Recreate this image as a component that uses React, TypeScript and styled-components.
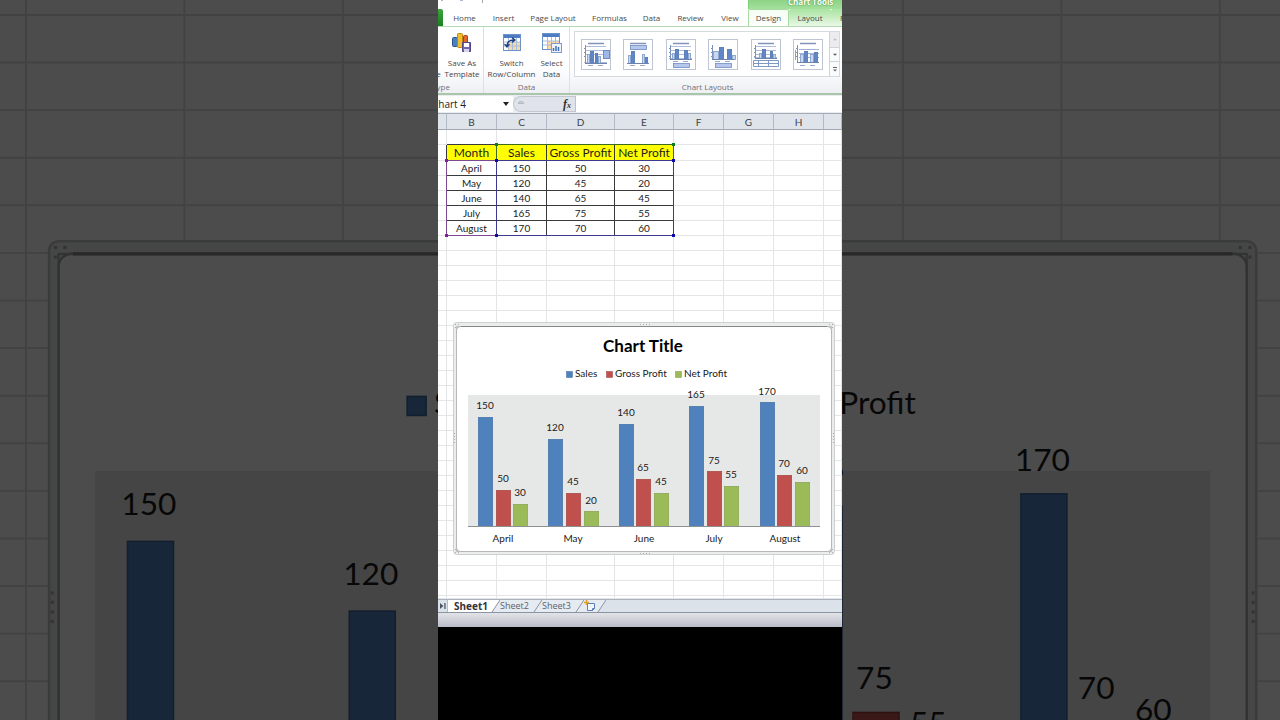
import React from "react";
import styled, { createGlobalStyle } from "styled-components";

const ui = `"Open Sans", "Noto Sans", sans-serif`;
const sheetFont = `Lato, "Open Sans", sans-serif`;

const GlobalStyle = createGlobalStyle`
  *, *::before, *::after { box-sizing: border-box; }
  body { margin: 0; background: #000; font-family: ${ui}; }
  button, input { font-family: inherit; margin: 0; padding: 0; border: 0; background: none; color: inherit; }
`;

/* ---------- data ---------- */

const series = [
  { name: "Sales", color: "#4f81bd", edge: "#3c699f", values: [150, 120, 140, 165, 170] },
  { name: "Gross Profit", color: "#c0504d", edge: "#9c3e3b", values: [50, 45, 65, 75, 70] },
  { name: "Net Profit", color: "#9bbb59", edge: "#7d9a43", values: [30, 20, 45, 55, 60] },
];
const months = ["April", "May", "June", "July", "August"];
const columns = [
  { id: "A", width: 9 },
  { id: "B", width: 50 },
  { id: "C", width: 50 },
  { id: "D", width: 68 },
  { id: "E", width: 59 },
  { id: "F", width: 50 },
  { id: "G", width: 50 },
  { id: "H", width: 50 },
  { id: "I", width: 18 },
];
const EMPTY_ROWS = 24;

/* ---------- page ---------- */

const Page = styled.main`
  position: relative;
  display: flex;
  justify-content: center;
  min-height: 100vh;
  overflow: hidden;
  background: #4c4c4c;
`;

const Backdrop = styled.svg`
  position: absolute;
  inset: 0;
  width: 100%;
  height: 100%;
`;

const Player = styled.section`
  position: relative;
  flex: 0 1 404px;
  min-width: 0;
  overflow: hidden;
  background: #000;
`;

const Excel = styled.div`
  display: flex;
  flex-direction: column;
  background: #fff;
`;

/* ---------- title and tabs ---------- */

const TitleRow = styled.header`
  display: flex;
  align-items: flex-end;
  justify-content: space-between;
  height: 9px;
  overflow: hidden;
`;

const QuickAccess = styled.svg`
  width: 60px;
  height: 9px;
`;

const ContextTitle = styled.div`
  flex: 0 0 94px;
  padding-left: 39px;
  font-size: 8px;
  line-height: 15px;
  font-weight: 700;
  white-space: nowrap;
  color: #fff;
  text-shadow: 0 0 2px #4f9a4a, 0 0 1px #4f9a4a;
  background: linear-gradient(#7ecb78, #a4e09c);
  border-left: 1px solid #7fcf79;
`;

const TabStrip = styled.nav`
  display: flex;
  height: 18px;
  overflow: hidden;
  border-bottom: 1px solid #b4d9b4;
`;

const FileTab = styled.button`
  flex: 0 0 5px;
  background: linear-gradient(#3fa33c, #17801f);
  border-radius: 0 2px 0 0;
`;

const Tab = styled.button<{ $w: number; $context?: boolean; $active?: boolean }>`
  flex: 0 0 ${(p) => p.$w}px;
  height: ${(p) => (p.$active ? 18 : 17)}px;
  font-size: 8px;
  line-height: ${(p) => (p.$active ? 15 : 18)}px;
  white-space: nowrap;
  color: #4a4a4a;
  background: ${(p) =>
    p.$active
      ? "linear-gradient(#f4fcf2, #fff)"
      : p.$context
        ? "linear-gradient(#a9e3a1, #e9f8e6)"
        : "transparent"};
  border: ${(p) => (p.$active ? "1px solid #a5dba0" : "0")};
  border-bottom: 0;
  border-radius: 2px 2px 0 0;
  text-align: ${(p) => (p.$context && p.$w > 42 ? "left" : "center")};
  padding-left: ${(p) => (p.$w > 42 && p.$context ? 9 : 0)}px;
  padding-bottom: ${(p) => (p.$active ? 2 : 0)}px;
`;

const tabs = [
  { label: "Home", w: 43 },
  { label: "Insert", w: 35 },
  { label: "Page Layout", w: 64 },
  { label: "Formulas", w: 49 },
  { label: "Data", w: 35 },
  { label: "Review", w: 43 },
  { label: "View", w: 36 },
  { label: "Design", w: 41, active: true },
  { label: "Layout", w: 42, context: true },
  { label: "Format", w: 44, context: true },
];

/* ---------- ribbon ---------- */

const Ribbon = styled.div`
  display: flex;
  height: 68px;
  background: linear-gradient(#fff 60%, #edeff2);
  border-bottom: 2px solid #a9c6ab;
`;

const Group = styled.section<{ $w: number }>`
  flex: 0 0 ${(p) => p.$w}px;
  min-width: 0;
  display: flex;
  flex-direction: column;
  justify-content: space-between;
  padding-top: 4px;
  border-right: 1px solid #dcdfe3;
`;

/* Scrolled partly out of view on its left side. */
const ClippedGroup = styled(Group)`
  align-items: flex-end;
`;

const GroupTools = styled.div`
  display: flex;
  justify-content: center;
  padding-top: 1px;
`;

const GroupLabel = styled.h2<{ $w?: number }>`
  margin: 0;
  width: ${(p) => (p.$w ? `${p.$w}px` : "auto")};
  font-size: 8px;
  font-weight: 400;
  line-height: 12px;
  text-align: center;
  color: #73707c;
`;

const BigButton = styled.button<{ $w: number }>`
  flex: 0 0 ${(p) => p.$w}px;
  display: flex;
  flex-direction: column;
  align-items: center;
  gap: 3px;
  font-size: 8px;
  line-height: 11px;
  white-space: pre;
  color: #46464c;
  svg { width: 22px; height: 22px; }
`;

const Gallery = styled.div`
  display: flex;
  height: 46px;
  margin: 0 5px 0 4px;
  border: 1px solid #d6d9dd;
  background: #fff;
`;

const GalleryList = styled.div`
  flex: 1;
  display: flex;
  align-items: center;
  justify-content: space-between;
  padding: 0 6px;
`;

const Thumb = styled.button`
  width: 30px;
  height: 31px;
  border: 1px solid #bcc5d1;
  background: #fff;
  svg { display: block; width: 28px; height: 29px; }
`;

const Scroller = styled.div`
  flex: 0 0 10px;
  display: grid;
  grid-template-rows: repeat(3, 1fr);
  border-left: 1px solid #cfd3d8;
`;

const ScrollButton = styled.button<{ $off?: boolean }>`
  display: grid;
  place-items: center;
  background: ${(p) => (p.$off ? "#ececee" : "#fafbfc")};
  & + & { border-top: 1px solid #cfd3d8; }
  svg { width: 4px; height: 5px; }
`;

/* ---------- formula bar ---------- */

const FormulaBar = styled.div`
  display: flex;
  height: 18px;
  margin-left: -6px;
  padding: 1px 0;
  background: #e9edf1;
`;

const NameBox = styled.label`
  flex: 0 0 81px;
  display: flex;
  align-items: center;
  justify-content: space-between;
  padding-right: 4px;
  background: #fff;
  input { width: 60px; font-size: 10px; line-height: 14px; color: #222; outline: 0; }
  svg { width: 6px; height: 4px; }
`;

const FxZone = styled.div`
  flex: 0 0 62px;
  display: flex;
  align-items: center;
  justify-content: space-between;
  padding: 0 4px;
  border: 1px solid #c3c8d0;
  border-right: 0;
  border-radius: 8px 0 0 8px;
  background: #e0e4ea;
`;

const Bump = styled.span`
  width: 6px;
  height: 3px;
  margin-bottom: 3px;
  border-radius: 3px 3px 0 0;
  border: 1px solid #b3b9c4;
  background: #cfd4dc;
`;

const Fx = styled.button`
  font: italic 700 12px/14px "Liberation Serif", serif;
  color: #333;
  sub { font-size: 8px; line-height: 1px; vertical-align: baseline; }
`;

const FormulaInput = styled.input`
  && { flex: 1; min-width: 0; background: #fff; border-left: 1px solid #bcc1ca; }
`;

/* ---------- sheet ---------- */

const SheetArea = styled.div`
  position: relative;
`;

const Grid = styled.table`
  width: 100%;
  table-layout: fixed;
  border-collapse: separate;
  border-spacing: 0;
  font-family: ${sheetFont};
  color: #1c1c1c;
`;

const ColumnHead = styled.th`
  height: 17px;
  padding: 0;
  font-size: 10px;
  line-height: 14px;
  font-weight: 400;
  color: #3d4148;
  background: #dfe3ea;
  border-top: 1px solid #a5abb5;
  border-right: 1px solid #b4bac5;
  border-bottom: 1px solid #a0a6b1;
`;

const edge = (on: boolean | undefined, dark: string) => (on ? dark : "#e4e5e7");

const Cell = styled.td<{ $h?: number; $right?: boolean; $bottom?: boolean }>`
  height: ${(p) => p.$h ?? 15}px;
  padding: 0;
  font-size: 10px;
  line-height: 13px;
  text-align: center;
  white-space: nowrap;
  border-right: 1px solid ${(p) => edge(p.$right, "#3a3a3a")};
  border-bottom: 1px solid ${(p) => edge(p.$bottom, "#3a3a3a")};
`;

const TitleCell = styled(Cell)`
  font-size: 12px;
  line-height: 15px;
  background: #ff0;
  border-right-color: #3a3a1a;
`;

const Range = styled.div<{ $x: number; $y: number; $w: number; $h: number; $c: string }>`
  position: absolute;
  left: ${(p) => p.$x}px;
  top: ${(p) => p.$y}px;
  width: ${(p) => p.$w}px;
  height: ${(p) => p.$h}px;
  border: 1px solid ${(p) => p.$c};
  pointer-events: none;
`;

const Handle = styled.i<{ $c: string; $right?: boolean; $low?: boolean }>`
  position: absolute;
  width: 3px;
  height: 3px;
  background: ${(p) => p.$c};
  ${(p) => (p.$right ? "right: -2px;" : "left: -2px;")}
  ${(p) => (p.$low ? "bottom: -2px;" : "top: -2px;")}
`;

const ranges = [
  { x: 58, y: 31, w: 178, h: 17, line: "#3c6a1e", dot: "#0a7d1c" },
  { x: 8, y: 47, w: 51, h: 76, line: "#7b4a90", dot: "#8a1aa0" },
  { x: 58, y: 47, w: 178, h: 76, line: "#3b3a8c", dot: "#0b0ba8" },
];

const ChartFrame = styled.svg`
  position: absolute;
  left: 15px;
  top: 209px;
  width: 382px;
  height: 233px;
`;

/* ---------- sheet tabs and status ---------- */

const SheetTabs = styled.footer`
  display: flex;
  height: 14px;
  border-top: 1px solid #a9b1bd;
  border-bottom: 1px solid #8b94a2;
  background: #dbe2ea;
`;

const SheetNav = styled.button`
  flex: 0 0 10px;
  display: grid;
  place-items: center;
  border-right: 1px solid #b7bec9;
  svg { width: 6px; height: 6px; }
`;

const SheetTab = styled.button<{ $w: number; $active?: boolean }>`
  flex: 0 0 ${(p) => p.$w}px;
  padding-left: ${(p) => (p.$active ? 6 : 0)}px;
  font-family: ${(p) => (p.$active ? `"Noto Sans", sans-serif` : ui)};
  font-size: ${(p) => (p.$active ? 10 : 9)}px;
  line-height: 12px;
  font-weight: ${(p) => (p.$active ? 700 : 400)};
  text-align: left;
  white-space: nowrap;
  color: ${(p) => (p.$active ? "#33363c" : "#5c626c")};
  background: ${(p) => (p.$active ? "#fff" : "#e6ebf1")};
  svg { display: block; width: 12px; height: 12px; }
`;

const Slant = styled.svg`
  flex: 0 0 9px;
  width: 9px;
  height: 12px;
`;

const StatusBar = styled.div`
  height: 14px;
  background: linear-gradient(#e3e4e8, #b9bcc8);
`;

/* ---------- drawings ---------- */

const BASE = 526;
const UNIT = 0.727;

const grips = [
  [455, 324], [458, 324], [455, 327],
  [832, 324], [829, 324], [832, 327],
  [455, 552], [458, 552], [455, 549],
  [832, 552], [829, 552], [832, 549],
];

function ChartArt() {
  return (
    <g fontFamily={sheetFont} fill="#1a1a1a">
      <rect x="453.5" y="322.5" width="381" height="232" rx="3" fill="#ebecec" stroke="#c3c5c7" strokeWidth="0.8" />
      <path d="M456.500 333V326.500H463M825 326.500h6.500V333M831.500 545v6.500H825M463 551.500H456.500V545" fill="none" stroke="#a9abad" strokeWidth="0.7" />
      <rect x="456.500" y="326.500" width="375" height="225" rx="4" fill="#fff" stroke="#a6a8aa" strokeWidth="0.8" />
      <path d="M461 326.500H827" stroke="#858688" />
      <g fill="#aaacae">
        {[0, 3, 6, 9].map((d) => (
          <React.Fragment key={d}>
            <rect x={640 + d} y="324" width="1" height="1" />
            <rect x={640 + d} y="553" width="1" height="1" />
            <rect x="454" y={433 + d} width="1" height="1" />
            <rect x="833" y={433 + d} width="1" height="1" />
          </React.Fragment>
        ))}
        {grips.map(([x, y]) => (
          <rect key={`${x}-${y}`} x={x} y={y} width="1" height="1" />
        ))}
      </g>
      <text x="643" y="352" fontSize="17" fontWeight="700" textAnchor="middle" fill="#000">
        Chart Title
      </text>
      {series.map((s, i) => (
        <g key={s.name}>
          <rect x={[566, 606, 675][i] + 0.5} y="371.500" width="6" height="6" fill={s.color} stroke={s.edge} strokeWidth="0.5" />
          <text x={[575, 615, 684][i]} y="377" fontSize="10">
            {s.name}
          </text>
        </g>
      ))}
      <rect x="468" y="395" width="352" height="131" fill="#e6e7e7" />
      {series.map((s, i) =>
        s.values.map((v, m) => {
          const x = Math.round(478 + m * 70.4 + i * 17.6);
          const h = Math.round(v * UNIT);
          return (
            <g key={`${i}-${m}`}>
              <rect x={x + 0.25} y={BASE - h + 0.25} width="14.5" height={h} fill={s.color} stroke={s.edge} strokeWidth="0.5" />
              <text x={x + 7} y={Math.round(BASE - v * UNIT - 7.9)} fontSize="10" textAnchor="middle">
                {v}
              </text>
            </g>
          );
        })
      )}
      <path d="M468 526.500H820" stroke="#8e9092" />
      {months.map((m, i) => (
        <text key={m} x={Math.round(503 + i * 70.4)} y="542" fontSize="10" textAnchor="middle">
          {m}
        </text>
      ))}
    </g>
  );
}

/* The same sheet, enlarged to cover the page and dimmed behind the player. */
function BackdropArt() {
  const xs = [446.2, 496.2, 546.2, 615, 673, 723, 773, 823];
  const ys = Array.from({ length: 16 }, (_, i) => 251.1 + i * 15.02);
  return (
    <Backdrop viewBox="438 246.375 404 227.25" preserveAspectRatio="xMidYMid slice" aria-hidden="true">
      <rect x="438" y="240" width="404" height="240" fill="#fff" />
      <g stroke="#dcdddf" strokeWidth="0.6">
        {xs.map((x) => <path key={x} d={`M${x} 240V480`} />)}
        {ys.map((y) => <path key={y} d={`M438 ${y}H842`} />)}
      </g>
      <ChartArt />
      <rect x="438" y="240" width="404" height="240" fill="#000" opacity="0.7" />
    </Backdrop>
  );
}

const ChartTypeIcon = () => (
  <svg viewBox="0 0 22 22" aria-hidden="true">
    <rect x="1.500" y="8.500" width="5" height="10" rx="1" fill="#4a80c0" stroke="#2b5689" />
    <rect x="6.500" y="3.500" width="5" height="15" rx="1" fill="#f4bd2c" stroke="#bd8413" />
    <rect x="11.500" y="6.500" width="5" height="12" rx="1" fill="#e2692c" stroke="#b03c17" />
  </svg>
);

const SaveTemplateIcon = () => (
  <svg viewBox="0 0 22 22" aria-hidden="true">
    <rect x="1.500" y="5.500" width="5" height="9" rx="1" fill="#4a80c0" stroke="#2b5689" />
    <rect x="6.500" y="1.500" width="5" height="14" rx="1" fill="#f4bd2c" stroke="#bd8413" />
    <rect x="12.500" y="3.500" width="4" height="10" rx="1" fill="#e2692c" stroke="#b03c17" />
    <path d="M11.500 10.500h8v9h-8z" fill="#7665ab" stroke="#54468a" />
    <path d="M13 11h5v4h-5z" fill="#fff" />
    <path d="M13 17h5v3h-5z" fill="#d9d4ec" />
  </svg>
);

const TableArt = () => (
  <>
    <rect x="2.500" y="2.500" width="17" height="16" fill="#fff" stroke="#6d92c7" />
    <path d="M3 3h16v3H3z" fill="#4b7cc4" />
    <path d="M8 10h11v8H8z" fill="#fbd9a6" />
    <path d="M3 10h16M3 14h16M7.500 6v12M11.500 6v12M15.500 6v12" stroke="#a6bddd" />
  </>
);

const SwitchIcon = () => (
  <svg viewBox="0 0 22 22" fill="none" aria-hidden="true">
    <TableArt />
    <path d="M6 14q0-6 7-6M11 5.500l3 2.500-3 2.500M3.500 12l2.500 3 2.500-3" stroke="#20417c" strokeWidth="1.300" />
  </svg>
);

const SelectIcon = () => (
  <svg viewBox="0 0 22 22" fill="none" aria-hidden="true">
    <g transform="translate(-1 -1)"><TableArt /></g>
    <rect x="10.500" y="11.500" width="10" height="9" fill="#edf3fb" stroke="#7e9dca" />
    <path d="M12.500 19v-3M15 19v-5M17.500 19v-4" stroke="#3f6db3" strokeWidth="1.500" />
  </svg>
);

/* Each bar: left, top, width, dark or light. */
const thumbs: { base: number; bars: [number, number, number, boolean][] }[] = [
  { base: 23, bars: [[5, 14, 3, false], [8, 11, 4, true], [13, 13, 3, true], [16, 16, 3, false]] },
  { base: 23, bars: [[4, 15, 3, false], [7, 11, 4, true], [18, 14, 3, false], [21, 17, 3, true]] },
  { base: 19, bars: [[5, 13, 3, false], [8, 9, 4, true], [17, 10, 4, true], [21, 13, 3, false]] },
  { base: 19, bars: [[4, 11, 6, false], [10, 7, 5, true], [18, 9, 5, true], [23, 15, 4, false]] },
  { base: 18, bars: [[7, 13, 3, false], [10, 9, 4, true], [18, 11, 3, true], [21, 14, 3, false]] },
  { base: 22, bars: [[6, 14, 4, false], [10, 11, 4, true], [16, 14, 4, false], [20, 12, 4, true]] },
];

function LayoutThumb({ kind }: { kind: number }) {
  const { base, bars } = thumbs[kind];
  return (
    <svg viewBox="0 0 28 29" fill="none" aria-hidden="true">
      {kind !== 3 && <path d="M6 3.500h16" stroke="#8193b8" strokeWidth="1.500" />}
      {kind === 1 && <rect x="6.500" y="5.500" width="16" height="4" fill="#b5c8ec" stroke="#6f8cc6" strokeWidth="0.8" />}
      {[0, 2, 4].includes(kind) && (
        <path d={`M4 6.500h20M4 10.500h20M4 14.500h20M2 ${base - 0.5}h23`} stroke="#aebdd8" />
      )}
      {kind === 5 && <path d="M5 9.500h20M5 13.500h20M5 17.500h20" stroke="#9fb3d6" />}
      {kind !== 1 && <path d={`M3.500 5v${base - 4}M2 8.500h1M2 12.500h1M2 16.500h1`} stroke="#7c93bd" />}
      {bars.map(([x, top, w, dark]) => (
        <rect
          key={x}
          x={x + 0.5}
          y={top + 0.5}
          width={w - 1}
          height={base - top}
          fill={dark ? "#5f86c8" : "#c9d8f0"}
          stroke={dark ? "#5f80b8" : "#8fa8d0"}
        />
      ))}
      <path d={`M3 ${base + 0.5}h22`} stroke="#6c83ae" />
      {[0, 1, 5].includes(kind) && <path d="M6 25.500h5M16 25.500h5" stroke="#9aaac6" />}
      {kind === 0 && <rect x="21.500" y="10.500" width="6" height="8" fill="#9db8e6" stroke="#6c8cc6" />}
      {(kind === 2 || kind === 3) && (
        <>
          <path d="M6 21.500h5M16 21.500h5" stroke="#9aaac6" />
          <rect x="6.500" y="23.500" width="16" height="4" fill="#b5c8ec" stroke="#6f8cc6" strokeWidth="0.8" />
        </>
      )}
      {kind === 4 && (
        <path d="M1.500 20.500h25v6h-25zM1.500 23.500h25M6.500 20v7M16.500 20v7" stroke="#7d97c6" />
      )}
      {kind === 5 && <path d="M1.500 10v10" stroke="#7fa4dc" />}
    </svg>
  );
}

const SlantArt = ({ left, right }: { left: string; right: string }) => (
  <Slant viewBox="0 0 9 12" aria-hidden="true">
    <path d="M0 0H9L1 12H0z" fill={left} />
    <path d="M9 0V12H1z" fill={right} />
    <path d="M9 0L1 12" stroke="#8b94a2" fill="none" />
  </Slant>
);

/* ---------- app ---------- */

export default function App() {
  const tint = "#e6ebf1";
  return (
    <>
      <GlobalStyle />
      <Page>
        <BackdropArt />
        <Player>
          <Excel>
            <TitleRow>
              <QuickAccess viewBox="0 0 60 9" aria-hidden="true">
                <path d="M3 0h2M22 0h3" stroke="#8fa3bd" strokeWidth="1.500" />
                <path d="M44.500 0v3" stroke="#a8a8a8" />
              </QuickAccess>
              <ContextTitle>Chart Tools</ContextTitle>
            </TitleRow>
            <TabStrip aria-label="Ribbon tabs">
              <FileTab aria-label="File" />
              {tabs.map((t) => (
                <Tab key={t.label} $w={t.w} $active={t.active} $context={t.context}>
                  {t.label}
                </Tab>
              ))}
            </TabStrip>

            <Ribbon>
              <ClippedGroup $w={46}>
                <GroupTools>
                  <BigButton $w={41}>
                    <ChartTypeIcon />
                    {"Change\nChart Type"}
                  </BigButton>
                  <BigButton $w={42}>
                    <SaveTemplateIcon />
                    {"Save As\nTemplate"}
                  </BigButton>
                </GroupTools>
                <GroupLabel $w={84}>Type</GroupLabel>
              </ClippedGroup>
              <Group $w={86}>
                <GroupTools>
                  <BigButton $w={50}>
                    <SwitchIcon />
                    {"Switch\nRow/Column"}
                  </BigButton>
                  <BigButton $w={30}>
                    <SelectIcon />
                    {"Select\nData"}
                  </BigButton>
                </GroupTools>
                <GroupLabel>Data</GroupLabel>
              </Group>
              <Group $w={276}>
                <Gallery>
                  <GalleryList>
                    {thumbs.map((_, k) => (
                      <Thumb key={k} aria-label={`Layout ${k + 1}`}>
                        <LayoutThumb kind={k} />
                      </Thumb>
                    ))}
                  </GalleryList>
                  <Scroller>
                    <ScrollButton $off aria-label="Scroll up">
                      <svg viewBox="0 0 5 6"><path d="M0 4L2.500 1.500 5 4z" fill="#b9bcc2" /></svg>
                    </ScrollButton>
                    <ScrollButton aria-label="Scroll down">
                      <svg viewBox="0 0 5 6"><path d="M0 2L2.500 4.500 5 2z" fill="#555" /></svg>
                    </ScrollButton>
                    <ScrollButton aria-label="More layouts">
                      <svg viewBox="0 0 5 6"><path d="M0 0h5v1H0zM0 3L2.500 5.500 5 3z" fill="#666" /></svg>
                    </ScrollButton>
                  </Scroller>
                </Gallery>
                <GroupLabel>Chart Layouts</GroupLabel>
              </Group>
            </Ribbon>

            <FormulaBar>
              <NameBox>
                <input aria-label="Name box" defaultValue="Chart 4" />
                <svg viewBox="0 0 6 4" aria-hidden="true"><path d="M0 0h6L3 4z" fill="#222" /></svg>
              </NameBox>
              <FxZone>
                <Bump />
                <Fx aria-label="Insert function">f<sub>x</sub></Fx>
              </FxZone>
              <FormulaInput aria-label="Formula" />
            </FormulaBar>

            <SheetArea>
              <Grid>
                <colgroup>
                  {columns.map((c) => <col key={c.id} width={c.width} />)}
                </colgroup>
                <thead>
                  <tr>
                    {columns.map((c) => (
                      <ColumnHead key={c.id} scope="col">
                        {c.id === "A" || c.id === "I" ? "" : c.id}
                      </ColumnHead>
                    ))}
                  </tr>
                </thead>
                <tbody>
                  <tr>
                    {columns.map((c, i) => <Cell key={c.id} $bottom={i > 0 && i < 5} />)}
                  </tr>
                  <tr>
                    <Cell $h={16} $right />
                    {["Month", ...series.map((s) => s.name)].map((t) => (
                      <TitleCell key={t} $h={16} $right $bottom>{t}</TitleCell>
                    ))}
                    {columns.slice(5).map((c) => <Cell key={c.id} $h={16} />)}
                  </tr>
                  {months.map((m, r) => (
                    <tr key={m}>
                      <Cell $right />
                      <Cell $right $bottom>{m}</Cell>
                      {series.map((s) => (
                        <Cell key={s.name} $right $bottom>{s.values[r]}</Cell>
                      ))}
                      {columns.slice(5).map((c) => <Cell key={c.id} />)}
                    </tr>
                  ))}
                  {Array.from({ length: EMPTY_ROWS }, (_, r) => (
                    <tr key={r}>
                      {columns.map((c) => <Cell key={c.id} />)}
                    </tr>
                  ))}
                  <tr>
                    {columns.map((c) => <Cell key={c.id} $h={3} />)}
                  </tr>
                </tbody>
              </Grid>
              {ranges.map((g) => (
                <Range key={g.dot} $x={g.x} $y={g.y} $w={g.w} $h={g.h} $c={g.line}>
                  <Handle $c={g.dot} />
                  <Handle $c={g.dot} $right />
                  <Handle $c={g.dot} $low />
                  <Handle $c={g.dot} $right $low />
                </Range>
              ))}
              <ChartFrame viewBox="453 322 382 233" role="img" aria-label="Column chart of sales and profit by month">
                <ChartArt />
              </ChartFrame>
            </SheetArea>

            <SheetTabs>
              <SheetNav aria-label="Last sheet">
                <svg viewBox="0 0 7 7"><path d="M0 0L4 3.500 0 7zM5 0h1.500v7H5z" fill="#4c5664" /></svg>
              </SheetNav>
              <SheetTab $w={43} $active>Sheet1</SheetTab>
              <SlantArt left="#fff" right={tint} />
              <SheetTab $w={33}>Sheet2</SheetTab>
              <SlantArt left={tint} right={tint} />
              <SheetTab $w={33}>Sheet3</SheetTab>
              <SlantArt left={tint} right={tint} />
              <SheetTab $w={13} aria-label="Insert sheet">
                <svg viewBox="0 0 12 12" fill="none">
                  <path d="M3.500 3.500h7v5l-2 2h-5z" fill="#f3f7fc" stroke="#5b7fb8" />
                  <path d="M8.500 10.500v-2h2" stroke="#5b7fb8" />
                  <path d="M2.500 0v5M0 2.500h5" stroke="#e0a02a" strokeWidth="1.500" />
                </svg>
              </SheetTab>
              <SlantArt left={tint} right="#dbe2ea" />
            </SheetTabs>
            <StatusBar />
          </Excel>
        </Player>
      </Page>
    </>
  );
}
